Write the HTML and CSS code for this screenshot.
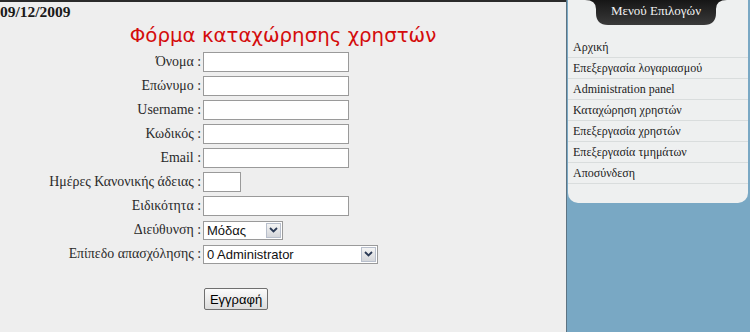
FILE: index.html
```html
<!DOCTYPE html>
<html lang="el">
<head>
<meta charset="utf-8">
<title>Φόρμα καταχώρησης χρηστών</title>
<link rel="stylesheet" href="styles.css">
</head>
<body>
<main class="main">
  <div class="date">09/12/2009</div>
  <h1 class="title">Φόρμα καταχώρησης χρηστών</h1>
  <form class="form">
    <label class="lbl">Όνομα :</label><div class="field"><input class="txt" type="text"></div>
    <label class="lbl">Επώνυμο :</label><div class="field"><input class="txt" type="text"></div>
    <label class="lbl">Username :</label><div class="field"><input class="txt" type="text"></div>
    <label class="lbl">Κωδικός :</label><div class="field"><input class="txt" type="password"></div>
    <label class="lbl">Email :</label><div class="field"><input class="txt" type="text"></div>
    <label class="lbl">Ημέρες Κανονικής άδειας :</label><div class="field"><input class="txt short" type="text"></div>
    <label class="lbl">Ειδικότητα :</label><div class="field"><input class="txt" type="text"></div>
    <label class="lbl">Διεύθυνση :</label>
    <div class="field"><div class="sel sel-small"><select><option>Μόδας</option></select><span class="arrow"><svg width="9" height="6" viewBox="0 0 9 6"><path d="M1 1 L4.5 4.5 L8 1" fill="none" stroke="#2b3a55" stroke-width="1.8"/></svg></span></div></div>
    <label class="lbl">Επίπεδο απασχόλησης :</label>
    <div class="field"><div class="sel sel-wide"><select><option>0 Administrator</option></select><span class="arrow"><svg width="9" height="6" viewBox="0 0 9 6"><path d="M1 1 L4.5 4.5 L8 1" fill="none" stroke="#2b3a55" stroke-width="1.8"/></svg></span></div></div>
    <div class="submit-row"><button class="btn" type="button">Εγγραφή</button></div>
  </form>
</main>
<aside class="side">
  <div class="panel">
    <div class="tab">
      <svg class="tab-bg" width="142" height="25" viewBox="0 0 142 25">
        <defs>
          <linearGradient id="tg" x1="0" y1="0" x2="0" y2="1">
            <stop offset="0" stop-color="#161616"/>
            <stop offset="1" stop-color="#3a3a3a"/>
          </linearGradient>
        </defs>
        <path d="M0 0 Q11 0 11 9 V13 Q11 25 23 25 H119 Q131 25 131 13 V9 Q131 0 142 0 Z" fill="url(#tg)"/>
      </svg>
      <span class="tab-text">Μενού Επιλογών</span>
    </div>
    <ul class="menu">
      <li>Αρχική</li>
      <li>Επεξεργασία λογαριασμού</li>
      <li>Administration panel</li>
      <li>Καταχώρηση χρηστών</li>
      <li>Επεξεργασία χρηστών</li>
      <li>Επεξεργασία τμημάτων</li>
      <li>Αποσύνδεση</li>
    </ul>
  </div>
</aside>
</body>
</html>
```
FILE: styles.css
```css
html, body {
  margin: 0;
  padding: 0;
  height: 100%;
}
body {
  background: #eeeeee;
  display: flex;
  font-family: "Liberation Serif", "Times New Roman", serif;
  color: #222;
  overflow: hidden;
}
.main {
  width: 566px;
  flex: none;
  border-top: 2px solid #2a2a2a;
  box-sizing: border-box;
}
.date {
  font-weight: bold;
  font-size: 15.5px;
  height: 19px;
  line-height: 19px;
  color: #1a1a1a;
}
.title {
  margin: 0;
  text-align: center;
  font-family: "DejaVu Sans", Verdana, sans-serif;
  font-weight: normal;
  font-size: 19.8px;
  line-height: 30px;
  color: #d40c0c;
}
.form {
  margin-top: 1px;
  display: grid;
  grid-template-columns: 201px auto;
  grid-auto-rows: 20px;
  row-gap: 4px;
  column-gap: 2px;
}
.lbl {
  text-align: right;
  font-size: 13.9px;
  line-height: 20px;
  color: #2a2a2a;
  white-space: nowrap;
}
.field {
  display: flex;
  align-items: center;
}
.txt {
  box-sizing: border-box;
  width: 146px;
  height: 20px;
  margin: 0;
  border: 1px solid #9a9a9a;
  background: #fff;
  padding: 0 2px;
}
.txt.short {
  width: 38px;
}
.sel {
  box-sizing: border-box;
  height: 19px;
  border: 1px solid #9a9a9a;
  background: #fff;
  display: flex;
  align-items: center;
  padding-right: 1px;
}
.sel-small { width: 80px; }
.sel-wide { width: 175px; }
.sel select {
  appearance: none;
  -webkit-appearance: none;
  border: none;
  background: transparent;
  flex: 1;
  min-width: 0;
  height: 100%;
  padding: 0 3px;
  font-family: "Liberation Sans", Arial, sans-serif;
  font-size: 13px;
  color: #111;
  outline: none;
}
.arrow {
  flex: none;
  width: 15px;
  height: 15px;
  box-sizing: border-box;
  border: 1px solid #b8bfcc;
  background: linear-gradient(#f4f4f4, #d4d6da);
  display: flex;
  align-items: center;
  justify-content: center;
}
.submit-row {
  grid-column: 2;
  margin-top: 20px;
  height: 22px;
}
.btn {
  height: 22px;
  width: 64px;
  margin: 0 0 0 1px;
  padding: 0;
  font-family: "Liberation Sans", Arial, sans-serif;
  font-size: 13px;
  color: #000;
  border: 1px solid #6f6f6f;
  border-radius: 2px;
  background: linear-gradient(#fbfbfb, #dcdcdc);
}
.side {
  flex: 1;
  border-left: 1px solid #5d7382;
  background: #79a8c4;
}
.panel {
  margin: 0 2px 0 1px;
  height: 203px;
  box-sizing: border-box;
  background: #eef0f0;
  border-radius: 0 0 10px 10px;
  display: flex;
  flex-direction: column;
}
.tab {
  position: relative;
  width: 142px;
  height: 25px;
  margin-left: 17px;
  display: flex;
  align-items: center;
  justify-content: center;
}
.tab-bg {
  position: absolute;
  left: 0;
  top: 0;
}
.tab-text {
  position: relative;
  color: #f2f2f2;
  font-size: 13px;
  margin-top: -3px;
}
.menu {
  list-style: none;
  margin: 12px 0 0 0;
  padding: 0;
}
.menu li {
  height: 20px;
  line-height: 20px;
  border-bottom: 1px solid #d9dddd;
  padding-left: 5px;
  font-size: 12px;
  color: #222;
}
```
